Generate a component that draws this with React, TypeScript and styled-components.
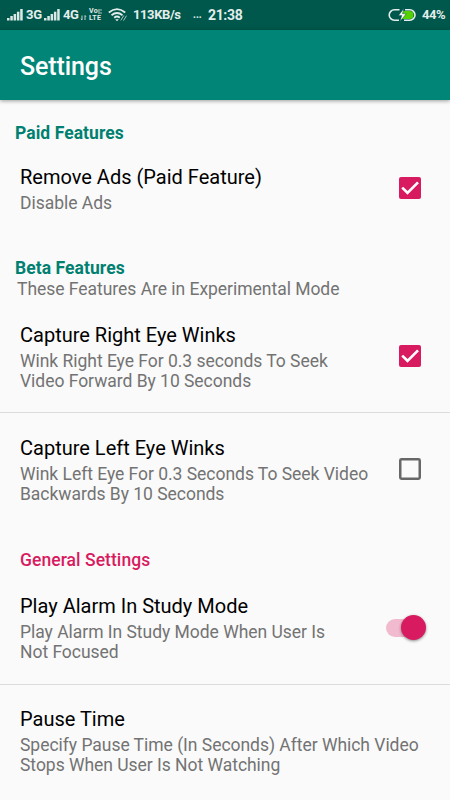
import React from "react";
import styled, { createGlobalStyle } from "styled-components";

const GlobalStyle = createGlobalStyle`
  * { box-sizing: border-box; }
  body { margin: 0; background: #fafafa; font-family: Roboto, sans-serif; overflow: hidden; }
`;

const Screen = styled.div`
  width: 450px;
  height: 800px;
  overflow: hidden;
  display: flex;
  flex-direction: column;
  background: #fafafa;
`;

const StatusBar = styled.header`
  flex: none;
  height: 30px;
  padding: 0 4px 0 7px;
  display: flex;
  align-items: center;
  background: #00574b;
  color: #e3eeec;
  font-size: 13px;
  font-weight: 700;
  line-height: 29px;
  white-space: nowrap;
`;

const StatusItem = styled.span<{ $width: number; $size?: number; $spacing?: number }>`
  flex: none;
  width: ${(p) => p.$width}px;
  height: 30px;
  font-size: ${(p) => p.$size ?? 13}px;
  letter-spacing: ${(p) => p.$spacing ?? 0}px;
`;

const ClockText = styled(StatusItem)`
  line-height: 31px;
`;

const StatusIcon = styled.svg<{ $gap?: number }>`
  flex: none;
  display: block;
  margin-right: ${(p) => p.$gap ?? 0}px;
`;

const VoLte = styled.span`
  flex: none;
  width: 20px;
  padding-left: 1px;
  display: flex;
  flex-direction: column;
  font-size: 7px;
  font-weight: 700;
  line-height: 7px;
  letter-spacing: 0.3px;
`;

const VoLine = styled.span`
  display: flex;
  height: 7px;
`;

const Spacer = styled.span`
  flex: 1;
`;

const AppBar = styled.div`
  flex: none;
  height: 70px;
  padding: 3px 20px 0;
  display: flex;
  align-items: center;
  background: #008577;
  color: #fff;
  box-shadow: 0 1px 4px rgba(0, 0, 0, 0.38);
  z-index: 1;
`;

const AppTitle = styled.h1`
  margin: 0;
  font-size: 25px;
  font-weight: 500;
  line-height: 30px;
  letter-spacing: -0.1px;
`;

const Category = styled.div<{ $height: number; $top: number; $left: number; $accent?: boolean }>`
  flex: none;
  height: ${(p) => p.$height}px;
  padding: ${(p) => p.$top}px 0 0 ${(p) => p.$left}px;
  color: ${(p) => (p.$accent ? "#d81b60" : "#008070")};
`;

const CategoryTitle = styled.h2<{ $bold?: boolean }>`
  margin: 0;
  font-size: 17.5px;
  font-weight: ${(p) => (p.$bold ? 700 : 500)};
  line-height: 21px;
  letter-spacing: 0.06px;
`;

const CategoryNote = styled.p`
  margin: 0 0 0 2px;
  color: #737373;
  font-size: 17.5px;
  line-height: 21px;
  letter-spacing: -0.03px;
`;

const Row = styled.div<{ $height: number; $divided?: boolean }>`
  flex: none;
  height: ${(p) => p.$height}px;
  padding: 0 20px;
  display: flex;
  align-items: center;
  border-bottom: ${(p) => (p.$divided ? "1px solid #dcdcdc" : "none")};
`;

const RowText = styled.div<{ $top: number }>`
  flex: 1;
  align-self: flex-start;
  padding-top: ${(p) => p.$top}px;
  white-space: nowrap;
`;

const RowTitle = styled.h3`
  margin: 0;
  color: #000;
  font-size: 20px;
  font-weight: 400;
  line-height: 24px;
`;

const Summary = styled.p`
  margin: 4px 0 0;
  color: #737373;
  font-size: 17.5px;
  line-height: 20px;
  letter-spacing: -0.03px;
`;

const Checkbox = styled.svg<{ $raise?: number }>`
  flex: none;
  display: block;
  margin: 0 9px ${(p) => p.$raise ?? 0}px 0;
`;

const Track = styled.div`
  flex: none;
  width: 34px;
  height: 18px;
  margin: 0 10px 1px 0;
  display: flex;
  align-items: center;
  border-radius: 9px;
  background: #f1bace;
`;

const Thumb = styled.span`
  flex: none;
  width: 25px;
  height: 25px;
  margin-left: 14.5px;
  border-radius: 50%;
  background: #d81b60;
  box-shadow: 0 1px 3px rgba(0, 0, 0, 0.45);
`;

const Signal = () => (
  <StatusIcon width="17" height="12" viewBox="0 0 17 12" fill="#dbe9e6" $gap={2}>
    <rect x="0" y="9" width="2.5" height="2.5" />
    <rect x="3.3" y="7" width="2.5" height="4.5" />
    <rect x="6.6" y="5" width="2.5" height="6.5" />
    <rect x="9.9" y="2.7" width="2.5" height="8.8" />
    <rect x="13.2" y="0" width="2.5" height="11.5" />
  </StatusIcon>
);

const DataArrows = () => (
  <StatusIcon width="7" height="14" viewBox="0 0 7 14" fill="none" stroke="#c5dad6" strokeWidth="1" $gap={1}>
    <path d="M2 7.5V12M.8 10.8 2 12M5 12V7.5M6 8.8 5 7.5" />
  </StatusIcon>
);

const LteWave = () => (
  <StatusIcon width="4" height="7" viewBox="0 0 4 7" fill="none" stroke="#e3eeec" strokeWidth=".9">
    <path d="M1 1v5M3 1.2v1.6M3 4.2v1.6" />
  </StatusIcon>
);

const Wifi = () => (
  <StatusIcon width="20" height="14" viewBox="0 0 20 14" fill="none" stroke="#e3eeec" strokeWidth="1.8" $gap={5}>
    <path d="M.8 4.5Q9-2.2 17.2 4.5M3.5 7.2Q9 2.8 14.5 7.2M6.2 9.7Q9 7.4 11.8 9.7" />
    <path d="M7.2 11.2h3.6L9 13.2z" fill="#e3eeec" stroke="none" />
    <path d="M12.8 12.4 15.8 7.5M15.5 12.6l3-4.9" strokeWidth="1" stroke="#a9c8c2" />
  </StatusIcon>
);

const Battery = () => (
  <StatusIcon width="28" height="14" viewBox="0 0 28 14" $gap={6}>
    <path d="M15 3h6.5a4 4 0 0 1 0 8H13z" fill="#55d000" />
    <path
      d="M11.5 1.8H6.4a5.2 5.2 0 0 0 0 10.4H11M17 1.8h4.8a5.2 5.2 0 0 1 0 10.4H16"
      fill="none"
      stroke="#e3eeec"
      strokeWidth="1.6"
    />
    <path d="M15.8.5 10.5 7.4h3.3L12 13.5l6.2-7.7h-3.7z" fill="#fff" stroke="#00574b" strokeWidth=".5" />
  </StatusIcon>
);

const Check = ({ checked, raise }: { checked?: boolean; raise?: number }) => (
  <Checkbox width="22" height="22" viewBox="0 0 22 22" $raise={raise}>
    {checked ? (
      <>
        <rect width="22" height="22" rx="2" fill="#d81b60" />
        <path d="m3.2 10.6 5.3 5.2L19 5.3" fill="none" stroke="#fff" strokeWidth="2.6" />
      </>
    ) : (
      <rect x="1.25" y="1.25" width="19.5" height="19.5" rx="1.2" fill="none" stroke="#676767" strokeWidth="2.5" />
    )}
  </Checkbox>
);

type SettingProps = {
  title: string;
  lines: string[];
  height: number;
  top: number;
  divided?: boolean;
  children?: React.ReactNode;
};

const Setting = ({ title, lines, height, top, divided, children }: SettingProps) => (
  <Row $height={height} $divided={divided}>
    <RowText $top={top}>
      <RowTitle>{title}</RowTitle>
      <Summary>
        {lines.map((line, i) => (
          <React.Fragment key={line}>
            {i > 0 && <br />}
            {line}
          </React.Fragment>
        ))}
      </Summary>
    </RowText>
    {children}
  </Row>
);

export default function App() {
  return (
    <>
      <GlobalStyle />
      <Screen>
        <StatusBar>
          <Signal />
          <StatusItem $width={18} $spacing={-0.3}>3G</StatusItem>
          <Signal />
          <StatusItem $width={17} $spacing={-0.5}>4G</StatusItem>
          <DataArrows />
          <VoLte>
            <VoLine>
              Vo
              <LteWave />
            </VoLine>
            <VoLine>LTE</VoLine>
          </VoLte>
          <Wifi />
          <StatusItem $width={60} $spacing={-0.4}>113KB/s</StatusItem>
          <StatusItem $width={15} $size={10}>...</StatusItem>
          <ClockText $width={40} $size={14} $spacing={-0.35}>21:38</ClockText>
          <Spacer />
          <Battery />
          <StatusItem $width={24} $spacing={-0.4}>44%</StatusItem>
        </StatusBar>
        <AppBar>
          <AppTitle>Settings</AppTitle>
        </AppBar>
        <Category $height={50} $top={23} $left={15}>
          <CategoryTitle $bold>Paid Features</CategoryTitle>
        </Category>
        <Setting title="Remove Ads (Paid Feature)" lines={["Disable Ads"]} height={76} top={15}>
          <Check checked />
        </Setting>
        <Category $height={75} $top={32} $left={15}>
          <CategoryTitle $bold>Beta Features</CategoryTitle>
          <CategoryNote>These Features Are in Experimental Mode</CategoryNote>
        </Category>
        <Setting
          title="Capture Right Eye Winks"
          lines={["Wink Right Eye For 0.3 seconds To Seek", "Video Forward By 10 Seconds"]}
          height={112}
          top={22}
          divided
        >
          <Check checked raise={1} />
        </Setting>
        <Setting
          title="Capture Left Eye Winks"
          lines={["Wink Left Eye For 0.3 Seconds To Seek Video", "Backwards By 10 Seconds"]}
          height={112}
          top={23}
        >
          <Check />
        </Setting>
        <Category $height={47} $top={25} $left={20} $accent>
          <CategoryTitle>General Settings</CategoryTitle>
        </Category>
        <Setting
          title="Play Alarm In Study Mode"
          lines={["Play Alarm In Study Mode When User Is", "Not Focused"]}
          height={113}
          top={22}
          divided
        >
          <Track>
            <Thumb />
          </Track>
        </Setting>
        <Setting
          title="Pause Time"
          lines={["Specify Pause Time (In Seconds) After Which Video", "Stops When User Is Not Watching"]}
          height={115}
          top={22}
        />
      </Screen>
    </>
  );
}
